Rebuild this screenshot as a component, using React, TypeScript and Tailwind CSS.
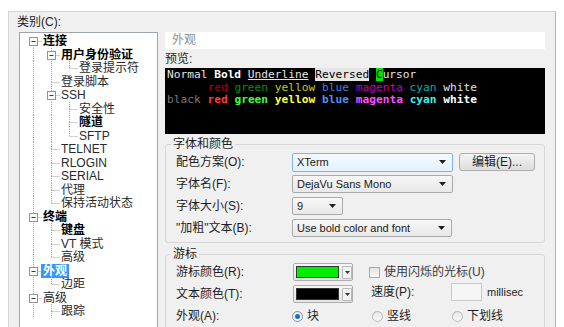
import React from "react";

type Node = { t: string; l: number; b?: boolean; e?: boolean; s?: boolean };

const nodes: Node[] = [
  { t: "连接", l: 0, b: true, e: true },
  { t: "用户身份验证", l: 1, b: true, e: true },
  { t: "登录提示符", l: 2 },
  { t: "登录脚本", l: 1 },
  { t: "SSH", l: 1, e: true },
  { t: "安全性", l: 2 },
  { t: "隧道", l: 2, b: true },
  { t: "SFTP", l: 2 },
  { t: "TELNET", l: 1 },
  { t: "RLOGIN", l: 1 },
  { t: "SERIAL", l: 1 },
  { t: "代理", l: 1 },
  { t: "保持活动状态", l: 1 },
  { t: "终端", l: 0, e: true, b: true },
  { t: "键盘", l: 1, b: true },
  { t: "VT 模式", l: 1 },
  { t: "高级", l: 1 },
  { t: "外观", l: 0, e: true, b: true, s: true },
  { t: "边距", l: 1 },
  { t: "高级", l: 0, e: true },
  { t: "跟踪", l: 1 },
];

function hasNext(i: number) {
  const l = nodes[i].l;
  for (let j = i + 1; j < nodes.length; j++) {
    if (nodes[j].l < l) return false;
    if (nodes[j].l === l) return true;
  }
  return true;
}

function ancestorIdx(i: number, k: number) {
  for (let j = i - 1; j >= 0; j--) if (nodes[j].l === k) return j;
  return -1;
}

const LC = "#a3a3a3";

function Cell({ v, top, bottom, h, exp }: { v?: boolean; top?: boolean; bottom?: boolean; h?: boolean; exp?: boolean }) {
  return (
    <svg width="18" height="13.5" viewBox="0 0 18 13.5" className="shrink-0 block">
      {v && <line x1="9.5" y1="0" x2="9.5" y2="13.5" stroke={LC} strokeDasharray="1 1" />}
      {top && <line x1="9.5" y1="0" x2="9.5" y2="7" stroke={LC} strokeDasharray="1 1" />}
      {bottom && <line x1="9.5" y1="7" x2="9.5" y2="13.5" stroke={LC} strokeDasharray="1 1" />}
      {h && <line x1="9.5" y1="7.5" x2="18" y2="7.5" stroke={LC} strokeDasharray="1 1" />}
      {exp && (
        <g>
          <rect x="5.5" y="3.5" width="8" height="8" fill="#fcfcfc" stroke="#939393" />
          <line x1="7.5" y1="7.5" x2="11.5" y2="7.5" stroke="#3b3b3b" />
        </g>
      )}
    </svg>
  );
}

function Tree() {
  return (
    <div>
      {nodes.map((n, i) => {
        const cells = [];
        for (let k = 0; k < n.l; k++) {
          const a = ancestorIdx(i, k);
          cells.push(<Cell key={k} v={a >= 0 && hasNext(a)} />);
        }
        cells.push(<Cell key="own" top={i !== 0} bottom={hasNext(i)} h exp={n.e} />);
        return (
          <div key={i} className="flex items-center h-[13.5px]">
            {cells}
            <span
              className={
                n.s
                  ? "ml-[-1px] px-[2px] bg-[#3399ff] text-white font-bold leading-[14px] whitespace-nowrap"
                  : n.b
                  ? "ml-[1px] text-black font-bold leading-[14px] whitespace-nowrap"
                  : "ml-[1px] text-[#2a2a2a] leading-[14px] whitespace-nowrap"
              }
            >
              {n.t}
            </span>
          </div>
        );
      })}
    </div>
  );
}

function Arrow() {
  return (
    <svg width="7" height="4" viewBox="0 0 7 4" className="block shrink-0">
      <path d="M0 0H7L3.5 4Z" fill="#1e1e1e" />
    </svg>
  );
}

function Select({ cls, text, focus }: { cls: string; text: string; focus?: boolean }) {
  return (
    <div
      className={
        cls +
        (focus
          ? " flex items-center justify-between border border-[#7eb4ea] rounded-[2px] bg-linear-to-b from-[#f4fafe] to-[#e3f1fb] pl-[4px] pr-[6px] text-[11px]"
          : " flex items-center justify-between border border-[#a9a9a9] rounded-[2px] bg-linear-to-b from-[#f7f7f7] to-[#e8e8e8] pl-[4px] pr-[6px] text-[11px]")
      }
    >
      <span className="whitespace-nowrap text-[#1a1a1a]">{text}</span>
      <Arrow />
    </div>
  );
}

function ColorBtn({ cls }: { cls: string }) {
  return (
    <div className="ml-[1px] w-[60px] h-[18px] flex items-center border border-[#adadad] rounded-[2px] bg-linear-to-b from-[#f6f6f6] to-[#e4e4e4] pl-[2px]">
      <div className={cls + " w-[43px] h-[12px] border border-[#333]"} />
      <div className="ml-[3px] w-[10px] h-[13px] border border-[#b8b8b8] rounded-[1px] bg-[#f3f3f3] flex items-center justify-center">
        <svg width="5" height="3" viewBox="0 0 5 3" className="block">
          <path d="M0 0H5L2.5 3Z" fill="#333" />
        </svg>
      </div>
    </div>
  );
}

function Radio({ on, label }: { on?: boolean; label: string }) {
  return (
    <div className="w-[80px] flex items-center">
      <div
        className={
          on
            ? "w-[11px] h-[11px] rounded-full border border-[#7a8fa6] bg-linear-to-b from-[#e9eef3] to-[#ffffff] flex items-center justify-center"
            : "w-[11px] h-[11px] rounded-full border border-[#b5b5b5] bg-linear-to-b from-[#e6e6e6] to-[#fafafa]"
        }
      >
        {on && <div className="w-[5px] h-[5px] rounded-full bg-[#1e6ec8]" />}
      </div>
      <span className="ml-[4px]">{label}</span>
    </div>
  );
}

export default function App() {
  return (
    <div className="w-[564px] h-[327px] overflow-hidden bg-white relative font-[family-name:Liberation_Sans,Noto_Sans_CJK_SC,sans-serif] text-[12px] text-[#1e1e1e]">
      <div className="ml-[8px] mt-[11px] w-[548px] h-[330px] bg-[#f0f0f0] border-t border-l border-[#d6d6d6] border-r border-r-[#7cc4e6] flex">
        {/* left column */}
        <div className="w-[156px] shrink-0 pl-[8px] pt-[1px]">
          <div className="h-[19px] leading-[18px] text-[#1e1e1e]">类别(C):</div>
          <div className="ml-[2px] w-[139px] h-[300px] bg-white border border-[#9ea4ab] overflow-hidden pt-[1.25px] pl-[4px]">
            <Tree />
          </div>
        </div>

        {/* right column */}
        <div className="w-[380px] shrink-0 pt-[20px]">
          <div className="h-[17px] bg-white pl-[7px] leading-[17px] text-[#8c8c8c]">外观</div>
          <div className="h-[19px] pt-[2px] leading-[17px]">预览:</div>
          <div className="h-[66px] bg-black pl-[2px] pt-[1px] font-[family-name:DejaVu_Sans_Mono,monospace] text-[11.2px] leading-[12.5px] whitespace-pre text-[#e5e5e5]">
            <div>
              <span>Normal </span>
              <span className="font-bold text-white">Bold</span>
              <span> </span>
              <span className="underline">Underline</span>
              <span> </span>
              <span className="bg-[#e5e5e5] text-black">Reversed</span>
              <span> </span>
              <span className="bg-[#00e000] text-black">C</span>
              <span>ursor</span>
            </div>
            <div>
              <span>{"      "}</span>
              <span className="text-[#b40000]">red</span> <span className="text-[#009000]">green</span>{" "}
              <span className="text-[#cdcd00]">yellow</span> <span className="text-[#3a80e0]">blue</span>{" "}
              <span className="text-[#c000c0]">magenta</span> <span className="text-[#00b0b0]">cyan</span>{" "}
              <span className="text-[#e0e0e0]">white</span>
            </div>
            <div className="font-bold">
              <span className="text-[#7a7a7a] font-normal">black</span> <span className="text-[#ff3c3c]">red</span>{" "}
              <span className="text-[#3cff3c]">green</span> <span className="text-[#ffff3c]">yellow</span>{" "}
              <span className="text-[#4a8ff0]">blue</span> <span className="text-[#ff4cff]">magenta</span>{" "}
              <span className="text-[#3cf0f0]">cyan</span> <span className="text-white">white</span>
            </div>
          </div>

          {/* font & colour group */}
          <fieldset className="mt-[2px] border border-[#d7d7d7] rounded-[3px] pb-[3px]">
            <legend className="ml-[5px] px-[2px] leading-[16px]">字体和颜色</legend>
            <div className="-mt-[1px] pl-[10px]">
              <div className="h-[22px] flex items-center">
                <div className="w-[116px]">配色方案(O):</div>
                <Select cls="w-[161px] h-[19px]" text="XTerm" focus />
                <div className="ml-[6px] w-[76px] h-[18px] border border-[#adadad] rounded-[3px] bg-linear-to-b from-[#f4f4f4] to-[#dcdcdc] flex items-center justify-center">
                  编辑(E)...
                </div>
              </div>
              <div className="h-[22px] flex items-center">
                <div className="w-[116px]">字体名(F):</div>
                <Select cls="w-[161px] h-[18px]" text="DejaVu Sans Mono" />
              </div>
              <div className="h-[22px] flex items-center">
                <div className="w-[116px]">字体大小(S):</div>
                <Select cls="w-[51px] h-[18px]" text="9" />
              </div>
              <div className="h-[22px] flex items-center">
                <div className="w-[116px]">"加粗"文本(B):</div>
                <Select cls="w-[160px] h-[18px]" text="Use bold color and font" />
              </div>
            </div>
          </fieldset>

          {/* cursor group */}
          <fieldset className="mt-[3px] border border-[#d7d7d7] rounded-[3px] pb-[3px]">
            <legend className="ml-[5px] px-[2px] leading-[16px]">游标</legend>
            <div className="-mt-[1px] pl-[10px]">
              <div className="h-[22px] flex items-center">
                <div className="w-[116px]">游标颜色(R):</div>
                <ColorBtn cls="bg-[#00ee00]" />
                <div className="ml-[16px] w-[11px] h-[11px] border border-[#a8a8a8] bg-linear-to-b from-[#e4e4e4] to-[#f8f8f8]" />
                <span className="ml-[4px] text-[#3a3a3a]">使用闪烁的光标(U)</span>
              </div>
              <div className="h-[22px] flex items-center">
                <div className="w-[116px]">文本颜色(T):</div>
                <ColorBtn cls="bg-black" />
                <div className="ml-[18px] w-[80px] -mt-[4px]">速度(P):</div>
                <div className="w-[31px] h-[18px] -mt-[4px] border border-[#c9c9c9] bg-[#f5f5f5]" />
                <span className="ml-[5px] -mt-[4px] text-[11px]">millisec</span>
              </div>
              <div className="h-[22px] flex items-center">
                <div className="w-[116px]">外观(A):</div>
                <Radio on label="块" />
                <Radio label="竖线" />
                <Radio label="下划线" />
              </div>
            </div>
          </fieldset>
        </div>
      </div>
    </div>
  );
}
